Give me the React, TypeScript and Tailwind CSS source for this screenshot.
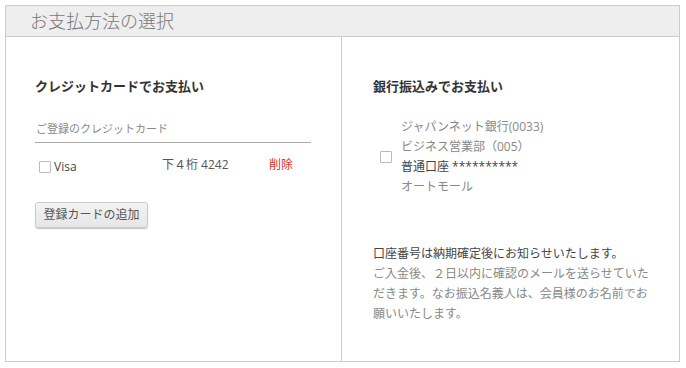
import React from "react";

const font = { fontFamily: '"Open Sans", "Noto Sans CJK JP", sans-serif' };

function Box() {
  return <span className="inline-block w-[12px] h-[12px] border border-[#bbb] bg-white rounded-[1px] shrink-0" />;
}

export default function App() {
  return (
    <div className="w-[686px] h-[368px] bg-white pt-[5px] pl-[5px]" style={font}>
      <div className="w-[675px] h-[357px] border border-[#ccc] flex flex-col">
        <div className="h-[31px] bg-[#eeeeee] border-b border-[#ccc] pl-[24px] flex items-center text-[18px] text-[#777] leading-none font-light">
          お支払方法の選択
        </div>
        <div className="flex flex-1">
          <div className="w-[336px] border-r border-[#ccc] pl-[29px] pt-[39px]">
            <div className="text-[13px] leading-[20px] font-bold text-[#333]">クレジットカードでお支払い</div>
            <div className="mt-[23px] w-[276px] border-b border-[#aaa] pb-[3px] text-[11px] leading-[20px] text-[#888] pl-px">
              ご登録のクレジットカード
            </div>
            <div className="flex items-center h-[20px] mt-[14px] text-[12px] text-[#444]">
              <div className="flex items-center gap-[3px] pl-[4px] w-[127px]">
                <Box />
                <span className="text-[12px]">Visa</span>
              </div>
              <span className="w-[107px] text-[#555] mt-[-4px]">下４桁 4242</span>
              <span className="text-[#d9302b] mt-[-4px]">削除</span>
            </div>
            <button className="mt-[25px] w-[113px] h-[26px] bg-gradient-to-b from-[#f3f3f3] to-[#e6e6e6] border border-[#ccc] rounded-[3px] shadow-[0_1px_1px_rgba(0,0,0,0.25)] text-[12px] text-[#555]">
              登録カードの追加
            </button>
          </div>
          <div className="flex-1 pl-[31px] pt-[39px]">
            <div className="text-[13px] leading-[20px] font-bold text-[#333]">銀行振込みでお支払い</div>
            <div className="mt-[21px] flex items-center">
              <div className="pl-[7px] w-[28px]">
                <Box />
              </div>
              <div className="text-[12px] leading-[20px] text-[#888]">
                <div>ジャパンネット銀行(0033)</div>
                <div>ビジネス営業部（005）</div>
                <div className="text-[#444]">普通口座 **********</div>
                <div>オートモール</div>
              </div>
            </div>
            <div className="mt-[47px] w-[280px] text-[12px] leading-[20px] text-[#888]">
              <div className="text-[#444]">口座番号は納期確定後にお知らせいたします。</div>
              ご入金後、２日以内に確認のメールを送らせていただきます。なお振込名義人は、会員様のお名前でお願いいたします。
            </div>
          </div>
        </div>
      </div>
    </div>
  );
}
